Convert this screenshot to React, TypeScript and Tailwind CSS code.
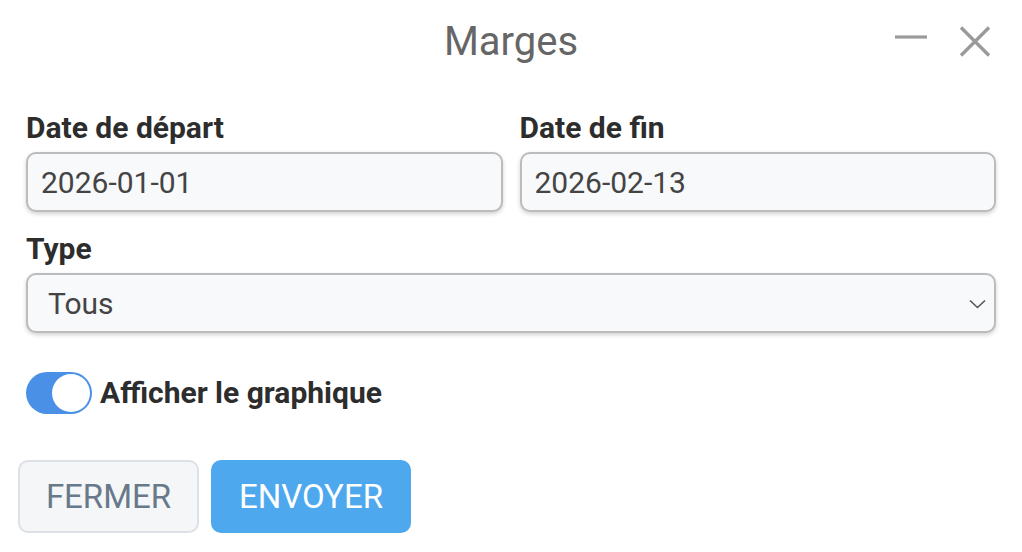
import { useState } from 'react'

const fieldClass =
  'h-[60px] w-full rounded-[10px] border-2 border-[#bcbcbc] bg-[#f8f9fa] pl-[13px] text-[30px] text-[#444] shadow-[0_2px_4px_rgba(0,0,0,0.18)] outline-none'

const labelClass = 'block text-[30px] leading-[36px] font-bold text-[#2d2d2d]'

const Field = ({ label, value }: { label: string; value: string }) => {
  return (
    <div>
      <label className={labelClass}>{label}</label>
      <input className={`${fieldClass} mt-[6px]`} defaultValue={value} />
    </div>
  )
}

export default function App() {
  const [showChart, setShowChart] = useState(true)

  return (
    <div className="h-[552px] w-[1022px] bg-white font-['Roboto',sans-serif]">
      <header className="grid h-[110px] grid-cols-[1fr_auto_1fr] items-start pt-[18px]">
        <span />
        <h1 className="text-[40px] leading-[48px] text-[#666]">Marges</h1>
        <div className="flex justify-end gap-[30px] pr-[30px] pt-[8px]">
          <button type="button" aria-label="Réduire" className="flex h-[32px] w-[34px] items-center justify-center">
            <svg width="34" height="32" viewBox="0 0 34 32">
              <path d="M1 11h32" stroke="#9a9a9a" strokeWidth="3.2" />
            </svg>
          </button>
          <button type="button" aria-label="Fermer" className="flex h-[32px] w-[34px] items-center justify-center">
            <svg width="34" height="32" viewBox="0 0 34 32">
              <path d="M3 1.5l28 28M31 1.5l-28 28" stroke="#9a9a9a" strokeWidth="3.4" />
            </svg>
          </button>
        </div>
      </header>

      <div className="px-[26px]">
        <div className="grid grid-cols-2 gap-[17px]">
          <Field label="Date de départ" value="2026-01-01" />
          <Field label="Date de fin" value="2026-02-13" />
        </div>

        <div className="mt-[19px]">
          <label className={labelClass}>Type</label>
          <div className="relative mt-[6px]">
            <select className={`${fieldClass} appearance-none pl-[20px]`} defaultValue="all">
              <option value="all">Tous</option>
            </select>
            <svg
              className="pointer-events-none absolute top-[26px] right-[10px]"
              width="17"
              height="10"
              viewBox="0 0 17 10"
            >
              <path d="M1 1.5l7.5 7 7.5-7" fill="none" stroke="#555" strokeWidth="1.6" />
            </svg>
          </div>
        </div>

        <div className="mt-[39px] flex items-center gap-[8px]">
          <button
            type="button"
            role="switch"
            aria-checked={showChart}
            onClick={() => setShowChart(!showChart)}
            className={`flex h-[42px] w-[66px] items-center rounded-full p-[2px] ${
              showChart ? 'justify-end bg-[#4a90e6]' : 'justify-start bg-[#d5d8dc]'
            }`}
          >
            <span className="size-[38px] rounded-full bg-white" />
          </button>
          <span className="text-[30px] leading-[36px] font-bold text-[#2d2d2d]">Afficher le graphique</span>
        </div>

        <div className="-ml-[8px] mt-[46px] flex gap-[12px]">
          <button
            type="button"
            className="h-[73px] w-[181px] rounded-[10px] border-2 border-[#dde1e6] bg-[#f5f6f8] text-[33px] text-[#68798a]"
          >
            FERMER
          </button>
          <button type="button" className="h-[73px] w-[200px] rounded-[10px] bg-[#4ea8ee] text-[33px] text-white">
            ENVOYER
          </button>
        </div>
      </div>
    </div>
  )
}
